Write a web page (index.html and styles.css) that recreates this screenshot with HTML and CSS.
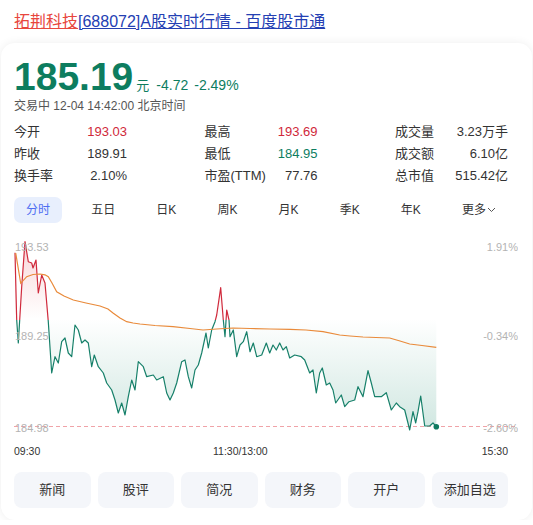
FILE: index.html
```html
<!DOCTYPE html>
<html lang="zh-CN">
<head>
    <meta charset="UTF-8">
    <meta name="viewport" content="width=device-width, initial-scale=1.0">
    <title>拓荆科技[688072]A股实时行情 - 百度股市通</title>
    <link rel="stylesheet" href="styles.css">
</head>
<body>

<div class="page-title">
    <a href="#"><span class="title-name">拓荆科技</span><span class="title-rest">[688072]A股实时行情 - 百度股市通</span></a>
</div>

<div class="card">
    <div class="quote">
        <span class="price">185.19</span>
        <span class="unit">元</span>
        <span class="change">-4.72</span>
        <span class="change">-2.49%</span>
    </div>
    <div class="status">交易中 12-04 14:42:00 北京时间</div>

    <div class="stats">
        <div class="stat"><span>今开</span><span class="up">193.03</span></div>
        <div class="stat"><span>最高</span><span class="up">193.69</span></div>
        <div class="stat"><span>成交量</span><span>3.23万手</span></div>
        <div class="stat"><span>昨收</span><span>189.91</span></div>
        <div class="stat"><span>最低</span><span class="down">184.95</span></div>
        <div class="stat"><span>成交额</span><span>6.10亿</span></div>
        <div class="stat"><span>换手率</span><span>2.10%</span></div>
        <div class="stat"><span>市盈(TTM)</span><span>77.76</span></div>
        <div class="stat"><span>总市值</span><span>515.42亿</span></div>
    </div>

    <div class="tabs">
        <span class="tab active">分时</span>
        <span class="tab">五日</span>
        <span class="tab">日K</span>
        <span class="tab">周K</span>
        <span class="tab">月K</span>
        <span class="tab">季K</span>
        <span class="tab">年K</span>
        <span class="tab">更多<svg class="chevron" width="9" height="6" viewBox="0 0 9 6"><path d="M1 1l3.5 3.5L8 1" fill="none" stroke="#555" stroke-width="1"/></svg></span>
    </div>

    <svg class="chart" viewBox="14 232 504 204" width="504" height="204">
        <defs>
            <linearGradient id="areaFill" gradientUnits="userSpaceOnUse" x1="0" y1="241" x2="0" y2="427">
                <stop offset="0" stop-color="#e0404e" stop-opacity="0.22"/>
                <stop offset="0.42" stop-color="#e0404e" stop-opacity="0"/>
                <stop offset="0.42" stop-color="#1a8a6c" stop-opacity="0"/>
                <stop offset="1" stop-color="#1a8a6c" stop-opacity="0.2"/>
            </linearGradient>
            <clipPath id="aboveClose"><rect x="14" y="232" width="504" height="88"/></clipPath>
            <clipPath id="belowClose"><rect x="14" y="320" width="504" height="116"/></clipPath>
        </defs>

        <line x1="14" y1="426.5" x2="518" y2="426.5" stroke="#f0a3a8" stroke-width="1" stroke-dasharray="4 3"/>

        <polygon fill="url(#areaFill)" points="15,320 15,252.7 16.7,320 18.3,343 21.7,286.7 25,241.7 28.3,261.7 31.7,263 33,268 36,260 38.3,293 41.7,275 45,283 48.3,321.7 51.7,373 55,356.7 58.3,363 61.7,341.7 65,338 68.3,353 71.7,356.7 75,325 78.3,330 81.7,343 85,340 88.3,343 91.7,366.7 94.3,355 98.3,366.7 103.3,373 106.7,383 111.7,390 115,400 118.3,413 121.7,403 125,415 128.3,396.7 131.7,380 135,390 138.3,361.7 143.3,366.7 146.7,376.7 153.3,375 156.7,380 163.3,376.7 166.7,393 170,400 173.3,393 176.7,383 181.7,361.7 185,360 188.3,376.7 191.7,388 195,370 198.3,365 201.7,353 206,333 208.3,348 211.7,330 215,321.7 216.7,315 220.7,287.7 223.3,320 225,336.7 226.7,310 229,320 230,336.7 233.3,330 236.7,356.7 240,345 243.3,341.7 246.7,331.7 250,351.7 253.3,343 256.7,356.7 261.7,355 266.3,343 269.7,353 273,345 276.3,350 279.7,343 283,350 286.3,346.7 289.7,358 294.7,355 301.3,356.7 304.7,360 309.7,373 313,370 316.3,393 319.7,373 322.3,368 326.3,385 329.7,383 333,390 335.7,403 341.3,395 344.7,406.7 349,401.7 354.7,400 358,386.7 363,396.7 368,370.7 371.3,383 374.7,396.7 381.3,396.7 386.3,392.7 391.3,410 396.3,403 399.7,406.7 404.7,410 409.7,430 413,411.7 415.7,423 418,411.7 420.7,396 424.7,426 429.7,426 433,423 436.3,426.7 436.3,320"/>

        <polyline id="priceLine" fill="none" stroke-width="1.2" stroke-linejoin="round" points="15,252.7 16.7,320 18.3,343 21.7,286.7 25,241.7 28.3,261.7 31.7,263 33,268 36,260 38.3,293 41.7,275 45,283 48.3,321.7 51.7,373 55,356.7 58.3,363 61.7,341.7 65,338 68.3,353 71.7,356.7 75,325 78.3,330 81.7,343 85,340 88.3,343 91.7,366.7 94.3,355 98.3,366.7 103.3,373 106.7,383 111.7,390 115,400 118.3,413 121.7,403 125,415 128.3,396.7 131.7,380 135,390 138.3,361.7 143.3,366.7 146.7,376.7 153.3,375 156.7,380 163.3,376.7 166.7,393 170,400 173.3,393 176.7,383 181.7,361.7 185,360 188.3,376.7 191.7,388 195,370 198.3,365 201.7,353 206,333 208.3,348 211.7,330 215,321.7 216.7,315 220.7,287.7 223.3,320 225,336.7 226.7,310 229,320 230,336.7 233.3,330 236.7,356.7 240,345 243.3,341.7 246.7,331.7 250,351.7 253.3,343 256.7,356.7 261.7,355 266.3,343 269.7,353 273,345 276.3,350 279.7,343 283,350 286.3,346.7 289.7,358 294.7,355 301.3,356.7 304.7,360 309.7,373 313,370 316.3,393 319.7,373 322.3,368 326.3,385 329.7,383 333,390 335.7,403 341.3,395 344.7,406.7 349,401.7 354.7,400 358,386.7 363,396.7 368,370.7 371.3,383 374.7,396.7 381.3,396.7 386.3,392.7 391.3,410 396.3,403 399.7,406.7 404.7,410 409.7,430 413,411.7 415.7,423 418,411.7 420.7,396 424.7,426 429.7,426 433,423 436.3,426.7"/>
        <use href="#priceLine" stroke="#d02a3c" clip-path="url(#aboveClose)"/>
        <use href="#priceLine" stroke="#17806a" clip-path="url(#belowClose)"/>

        <polyline fill="none" stroke="#e98a3a" stroke-width="1.2" points="15.7,253 20.7,283.3 26.7,276.7 33,274.5 40,274 45,274.8 48.3,276.7 52,283 56.7,291.7 64,296 73.3,300 86,303 100,306 108,309 113,313 120,318 126.7,321.7 133,323 140,324 155,325.5 173,326.7 190,328.5 203,330 216.7,329 233,328 250,328.5 270,329 290,329.3 306,330 323,331.7 339.7,335 350,336 363,337 376,337.5 389.7,338 400,341 409.7,344 422,345.5 436.3,347.3"/>

        <circle cx="436.3" cy="426.7" r="2.8" fill="#0f7a60"/>

        <text class="axis-label" x="15" y="250.5">193.53</text>
        <text class="axis-label" x="15" y="339.5">189.25</text>
        <text class="axis-label" x="15" y="432">184.98</text>
        <text class="axis-label" x="518" y="250.5" text-anchor="end">1.91%</text>
        <text class="axis-label" x="518" y="339.5" text-anchor="end">-0.34%</text>
        <text class="axis-label" x="518" y="432" text-anchor="end">-2.60%</text>
    </svg>

    <div class="times">
        <span>09:30</span>
        <span>11:30/13:00</span>
        <span class="time-end">15:30</span>
    </div>

    <div class="actions">
        <span class="action">新闻</span>
        <span class="action">股评</span>
        <span class="action">简况</span>
        <span class="action">财务</span>
        <span class="action">开户</span>
        <span class="action">添加自选</span>
    </div>
</div>

</body>
</html>
```

FILE: styles.css
```css
/* Global Styles */
body {
    margin: 0;
    background-color: #ffffff;
    color: #333333;
    font-family: "Liberation Sans", Arial, "Noto Sans CJK SC", sans-serif;
}

/* Page Title */
.page-title {
    padding: 12px 14px 0;
    font-size: 16px;
    line-height: 20px;
}

.page-title a {
    text-decoration: none;
}

.title-name {
    color: #e8463d;
    text-decoration: underline;
}

.title-rest {
    color: #2440b3;
    text-decoration: underline;
}

/* Card */
.card {
    margin: 11px 1px 0;
    padding: 12px 14px 12px 13px;
    background: #ffffff;
    border-radius: 14px;
    box-shadow: 0 0 10px rgba(0, 0, 0, 0.07);
}

.quote {
    display: flex;
    align-items: baseline;
    line-height: 44px;
    color: #0d7d5f;
}

.price {
    font-size: 39px;
    font-weight: bold;
    margin-right: 3px;
}

.unit {
    font-size: 13px;
    line-height: 1;
    margin-right: 7px;
}

.change {
    font-size: 14px;
    line-height: 1;
    margin-right: 6px;
}

.status {
    font-size: 12px;
    line-height: 14px;
    color: #555555;
}

/* Stats */
.stats {
    display: grid;
    grid-template-columns: repeat(3, 113px);
    justify-content: space-between;
    width: 494px;
    margin-top: 8px;
    font-size: 13px;
    line-height: 22px;
}

.stat {
    display: flex;
    justify-content: space-between;
}

.up {
    color: #d0283a;
}

.down {
    color: #0d7d5f;
}

/* Tabs */
.tabs {
    display: flex;
    justify-content: space-between;
    width: 494px;
    margin-top: 10px;
}

.tab {
    display: flex;
    align-items: center;
    padding: 0 12px;
    font-size: 12px;
    line-height: 26px;
    border-radius: 7px;
    color: #333333;
}

.tab.active {
    background-color: #e8effd;
    color: #4e6ef2;
}

.chevron {
    margin-left: 1px;
}

/* Chart */
.chart {
    display: block;
    margin-top: 9px;
}

.axis-label {
    font-size: 11px;
    fill: #b3b3b3;
}

.times {
    display: grid;
    grid-template-columns: 199px auto 1fr;
    width: 494px;
    margin-top: 8px;
    font-size: 10.5px;
    line-height: 14px;
    color: #333333;
}

.time-end {
    text-align: right;
}

/* Bottom Buttons */
.actions {
    display: grid;
    grid-template-columns: repeat(6, 1fr);
    gap: 7px;
    width: 494px;
    margin-top: 14px;
}

.action {
    height: 36px;
    line-height: 36px;
    text-align: center;
    font-size: 13px;
    background-color: #f4f6fa;
    border-radius: 8px;
}
```
